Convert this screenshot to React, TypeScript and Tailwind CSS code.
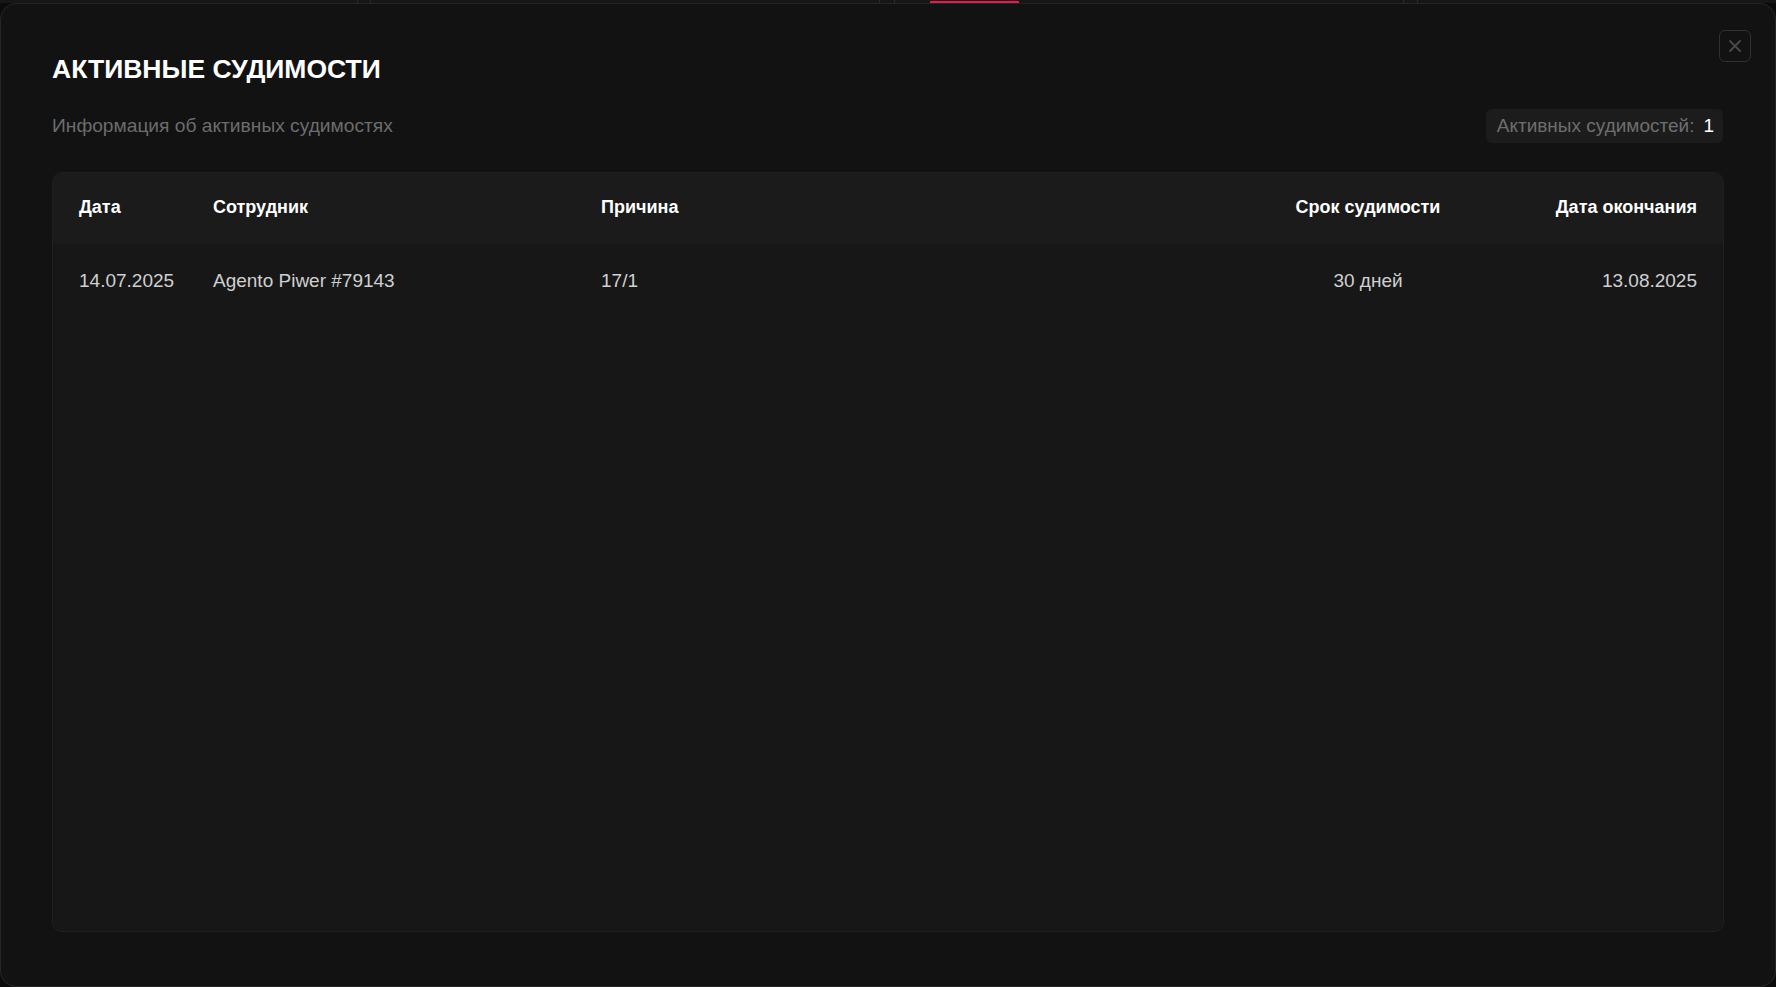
import React from "react";

const rows = [
  { date: "14.07.2025", emp: "Agento Piwer #79143", reason: "17/1", term: "30 дней", end: "13.08.2025" },
];

export default function App() {
  return (
    <div
      className="w-[1776px] h-[987px] bg-[#0b0b0b] flex flex-col overflow-hidden"
      style={{ fontFamily: '"Liberation Sans", Arial, sans-serif' }}
    >
      {/* strip of the page behind the modal */}
      <div className="h-[3px] shrink-0 flex items-stretch bg-[#161616]">
        <div className="w-[358px] border-r border-[#2a2a2a]" />
        <div className="w-[13px] border-r border-[#2a2a2a]" />
        <div className="w-[509px] border-r border-[#2a2a2a]" />
        <div className="w-[15px] border-r border-[#2a2a2a]" />
        <div className="w-[35px]" />
        <div className="w-[89px] flex flex-col justify-end">
          <div className="h-[2px] bg-[#e8194f]" />
        </div>
        <div className="w-[385px] border-r border-[#2a2a2a]" />
        <div className="w-[14px] border-r border-[#2a2a2a]" />
        <div className="flex-1" />
      </div>

      {/* modal */}
      <div className="flex-1 bg-[#121212] border border-[#262626] rounded-[16px] flex flex-col px-[51px] pb-[54px]">
        <div className="flex items-start justify-between pt-[26px]">
          <h1 className="text-[26.5px] leading-[30px] font-bold text-white mt-[24px]">
            АКТИВНЫЕ СУДИМОСТИ
          </h1>
          <button className="w-[32px] h-[32px] mr-[-27px] rounded-[6px] border border-[#303030] flex items-center justify-center text-[#4a4a4a]">
            <svg width="14" height="14" viewBox="0 0 14 14" fill="none" stroke="currentColor" strokeWidth="1.8" strokeLinecap="round">
              <path d="M2 2 L12 12 M12 2 L2 12" />
            </svg>
          </button>
        </div>

        <div className="flex items-center justify-between mt-[25px]">
          <p className="text-[19.2px] text-[#6c6c6c]">Информация об активных судимостях</p>
          <div className="h-[34px] rounded-[6px] bg-[#1c1c1c] flex items-center pl-[11px] pr-[9px] gap-[9px] text-[19px] mr-[1px]">
            <span className="text-[#6e6e6e]">Активных судимостей:</span>
            <span className="text-white">1</span>
          </div>
        </div>

        <div className="mt-[29px] flex-1 rounded-[10px] border border-[#202020] bg-[#171717] overflow-hidden flex flex-col">
          <div className="h-[71px] bg-[#1b1b1b] flex items-center pb-[3px] px-[26px] text-[18px] font-bold text-white">
            <div className="w-[134px]">Дата</div>
            <div className="w-[388px]">Сотрудник</div>
            <div className="flex-1">Причина</div>
            <div className="w-[160px] text-center">Срок судимости</div>
            <div className="w-[249px] text-right">Дата окончания</div>
          </div>
          {rows.map((r) => (
            <div key={r.date} className="h-[71px] flex items-center pt-[4px] px-[26px] text-[19px] text-[#d0d0d0]">
              <div className="w-[134px]">{r.date}</div>
              <div className="w-[388px]">{r.emp}</div>
              <div className="flex-1">{r.reason}</div>
              <div className="w-[160px] text-center">{r.term}</div>
              <div className="w-[249px] text-right">{r.end}</div>
            </div>
          ))}
        </div>
      </div>
    </div>
  );
}
